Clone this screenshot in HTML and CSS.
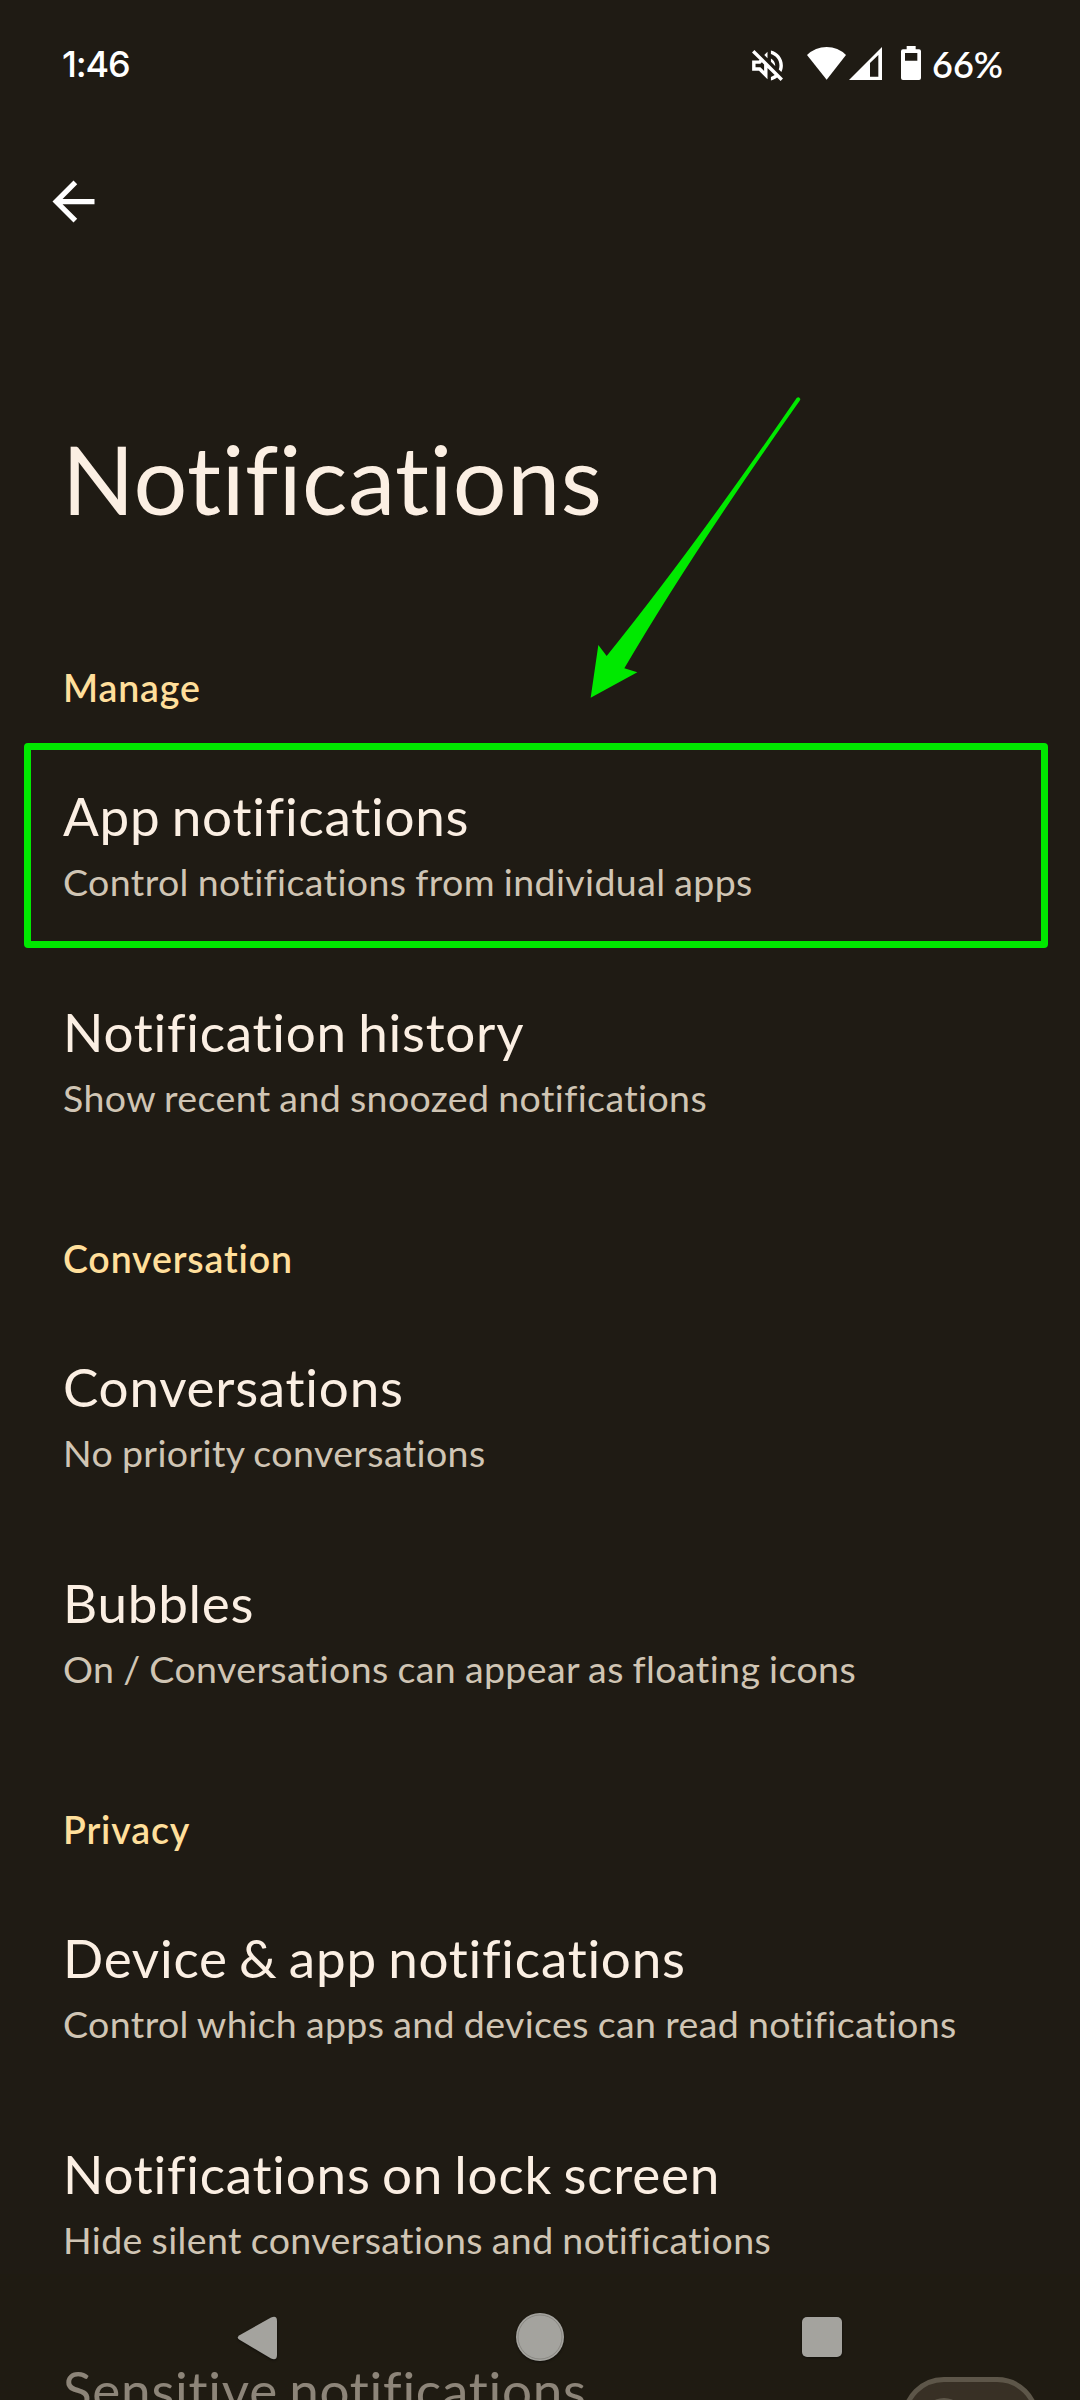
FILE: index.html
```html
<!DOCTYPE html>
<html lang="en">
<head>
<meta charset="utf-8">
<title>Notifications</title>
<link rel="stylesheet" href="styles.css">
</head>
<body>
<div class="screen">
  <header class="status-bar">
    <span class="clock">1:46</span>
    <div class="status-icons">
      <svg class="icon-mute" viewBox="0 0 24 24"><path d="M4.34 2.93L2.93 4.34 7.29 8.7 7 9H3v6h4l5 5v-6.59l4.18 4.18c-.65.49-1.38.88-2.18 1.11v2.06c1.34-.3 2.57-.92 3.61-1.75l2.05 2.05 1.41-1.41L4.34 2.93zM10 15.17L7.83 13H5v-2h2.83l.88-.88L10 11.41v3.76zM19 12c0 .82-.15 1.61-.41 2.34l1.53 1.53c.56-1.17.88-2.48.88-3.87 0-4.28-2.99-7.86-7-8.77v2.06c2.89.86 5 3.54 5 6.71zm-7-8l-1.88 1.88L12 7.76zm4.5 8c0-1.77-1.02-3.29-2.5-4.03v1.79l2.48 2.48c.01-.08.02-.16.02-.24z"/></svg>
      <svg class="icon-wifi" viewBox="0 0 117 102"><path d="M0 27Q25 3 59 3T117 27L59 101Z"/></svg>
      <svg class="icon-signal" viewBox="0 0 99 102"><path fill-rule="evenodd" d="M0 102L99 3V102ZM63 51V92H88V27Z"/></svg>
      <svg class="icon-battery" viewBox="0 0 60 102"><path fill-rule="evenodd" d="M17 0H44V10H54Q60 10 60 16V96Q60 102 54 102H6Q0 102 0 96V16Q0 10 6 10H17ZM12 21V44H49V21Z"/></svg>
      <span class="battery-level">66%</span>
    </div>
  </header>

  <div class="app-bar">
    <svg class="icon-back" viewBox="0 0 24 24"><path d="M20 11H7.83l5.59-5.59L12 4l-8 8 8 8 1.41-1.41L7.83 13H20v-2z"/></svg>
  </div>
  <h1 class="page-title">Notifications</h1>

  <main class="settings">
    <h2 class="category">Manage</h2>
    <div class="row highlighted">
      <div class="row-title">App notifications</div>
      <div class="row-summary">Control notifications from individual apps</div>
    </div>
    <div class="row">
      <div class="row-title">Notification history</div>
      <div class="row-summary">Show recent and snoozed notifications</div>
    </div>
    <h2 class="category">Conversation</h2>
    <div class="row">
      <div class="row-title">Conversations</div>
      <div class="row-summary">No priority conversations</div>
    </div>
    <div class="row">
      <div class="row-title">Bubbles</div>
      <div class="row-summary">On / Conversations can appear as floating icons</div>
    </div>
    <h2 class="category">Privacy</h2>
    <div class="row">
      <div class="row-title">Device &amp; app notifications</div>
      <div class="row-summary">Control which apps and devices can read notifications</div>
    </div>
    <div class="row">
      <div class="row-title">Notifications on lock screen</div>
      <div class="row-summary">Hide silent conversations and notifications</div>
    </div>
    <div class="row with-switch">
      <div class="row-title">Sensitive notifications</div>
      <div class="switch"><div class="thumb"></div></div>
    </div>
  </main>

  <svg class="pointer" viewBox="0 0 780 1020"><path d="M92 953L115 795L140 828Q400 505 710 54Q717 48 721 57Q721 60 718 64Q395 520 193 865L232 877Z"/></svg>

  <nav class="nav-bar">
    <svg class="nav-icon" viewBox="0 0 48 48"><path d="M37 4.600L5.500 22.200Q2 24.500 5.500 26.800L37 45.500Q43 48 43 42V8Q43 2 37 4.600Z"/></svg>
    <svg class="nav-icon" viewBox="0 0 48 48"><circle cx="24" cy="24" r="24"/><circle class="ring" cx="24" cy="24" r="22"/></svg>
    <svg class="nav-icon" viewBox="0 0 48 48"><rect x="4" y="4" width="40" height="40" rx="5"/></svg>
  </nav>
</div>
</body>
</html>
```
FILE: styles.css
```css
*,
*::after {
  box-sizing: border-box;
}

body {
  margin: 0;
  background: #1f1b14;
}

.screen {
  position: relative;
  display: flex;
  flex-direction: column;
  width: 1080px;
  height: 2400px;
  overflow: hidden;
  background: #1f1b14;
  color: #fbefe3;
  font-family: Lato, "Open Sans", sans-serif;
  font-variant-ligatures: none;
}

.status-bar {
  display: flex;
  flex: none;
  justify-content: space-between;
  height: 128px;
  padding: 38px 77px 0 62px;
  color: #fff;
  fill: #fff;
  font-size: 36px;
  line-height: 52px;
}

.clock {
  font-family: Inter, sans-serif;
  font-weight: 500;
  letter-spacing: -1.2px;
}

.status-icons {
  display: flex;
  align-items: flex-start;
}

.icon-mute {
  width: 41px;
  height: 41px;
  margin: 7px 19px 0 0;
}

.icon-wifi {
  width: 39px;
  height: 34px;
  margin: 8px 3px 0 0;
}

.icon-signal {
  width: 33px;
  height: 34px;
  margin: 8px 19px 0 0;
}

.icon-battery {
  width: 20px;
  height: 34px;
  margin: 8px 11px 0 0;
}

.battery-level {
  font-weight: 600;
}

.app-bar {
  display: flex;
  flex: none;
  align-items: center;
  height: 147px;
  padding-left: 42px;
}

.icon-back {
  width: 63px;
  height: 63px;
  fill: #fff;
}

.page-title {
  flex: none;
  height: 319px;
  margin: 0;
  padding: 146px 62px 0;
  font-size: 95px;
  line-height: 114px;
  font-weight: 400;
  letter-spacing: 0.5px;
}

.settings {
  flex: none;
}

.category {
  height: 139px;
  margin: 0;
  padding: 68px 63px 0;
  color: #ffdf9b;
  font-size: 37.5px;
  line-height: 52px;
  font-weight: 600;
  letter-spacing: 0.85px;
}

.row {
  position: relative;
  height: 216px;
  padding: 51px 63px 0;
}

.row-title {
  font-size: 53px;
  line-height: 64px;
  letter-spacing: 0.75px;
  word-spacing: -3px;
}

.row-summary {
  margin-top: 8px;
  color: #d0c5b4;
  font-size: 37.5px;
  line-height: 52px;
  letter-spacing: 0.4px;
  word-spacing: -1.2px;
}

.highlighted::after {
  content: "";
  position: absolute;
  top: 10px;
  left: 24px;
  width: 1024px;
  height: 205px;
  border: 7px solid #00e900;
  border-radius: 4px;
}

.with-switch {
  display: flex;
  justify-content: space-between;
  padding-right: 41px;
}

.switch {
  width: 137px;
  height: 84px;
  margin-top: 19px;
  padding: 16px;
  border: 5px solid #9b9182;
  border-radius: 42px;
  background: #51443a;
}

.thumb {
  width: 42px;
  height: 42px;
  border-radius: 50%;
  background: #9b9182;
}

.pointer {
  position: absolute;
  top: 380px;
  left: 560px;
  width: 260px;
  height: 340px;
  fill: #00e900;
}

.nav-bar {
  position: absolute;
  bottom: 0;
  left: 0;
  display: flex;
  align-items: center;
  justify-content: center;
  gap: 234px;
  width: 1080px;
  height: 126px;
  background: rgba(32, 28, 16, 0.5);
  fill: #a4a39e;
}

.nav-icon {
  width: 48px;
  height: 48px;
  filter: drop-shadow(0 1px 1px rgba(0, 0, 0, 0.5));
}

.ring {
  fill: none;
  stroke: #7e7d77;
  stroke-width: 0.7;
}
```
